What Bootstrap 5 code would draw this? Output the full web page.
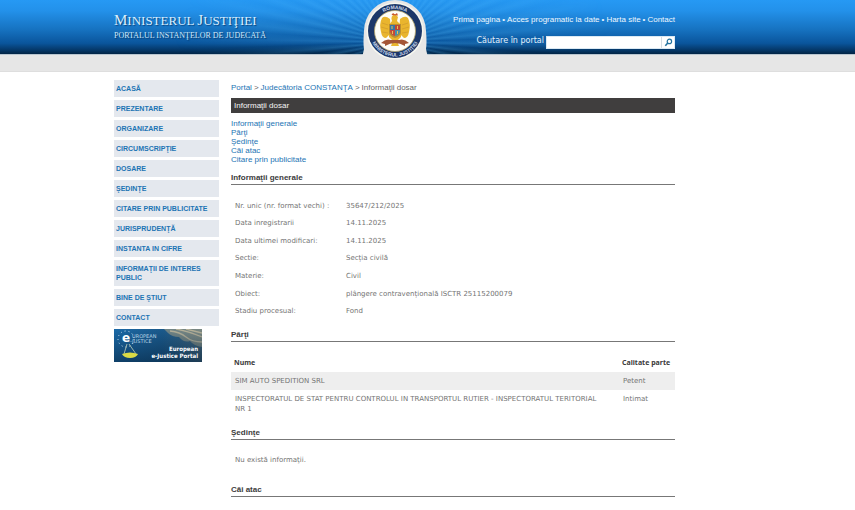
<!DOCTYPE html>
<html lang="ro">
<head>
<meta charset="utf-8">
<meta name="viewport" content="width=device-width, initial-scale=1">
<title>Informaţii dosar - Portalul instanţelor de judecată</title>
<link rel="stylesheet" href="https://cdn.jsdelivr.net/npm/bootstrap@5.3.0/dist/css/bootstrap.min.css">
<style>
  body { font: 8px/9px "Liberation Sans", Arial, sans-serif; color: #444; background: #fff; overflow-x: hidden; }
  a { color: #1c74b4; text-decoration: none; }
  a:hover { text-decoration: underline; }
  .page-shift { padding-right: 66px; }
  .page-wrap { max-width: 561px; }
  .site-top { background: linear-gradient(#2699f4 0, #2391ea 20%, #1672c0 55%, #0a559c 80%, #043462 94%, #022444 100%); height: 54px; position: relative; }
  .rays { position: absolute; inset: 0; right: 66px; overflow: hidden;
    background: repeating-conic-gradient(from 1deg at 50% 78%, rgba(90,190,250,.24) 0deg, rgba(0,60,120,.04) 3deg, rgba(90,190,250,.24) 6deg);
    -webkit-mask-image: radial-gradient(ellipse 220px 120px at 50% 78%, #000 15%, transparent 100%);
    mask-image: radial-gradient(ellipse 220px 120px at 50% 78%, #000 15%, transparent 100%); }
  .grey-band { height: 18px; background: #e6e6e6; border-top: 1px solid #b9c6d0; border-bottom: 1px solid #dedede; }
  .emblem { position: absolute; left: 50%; top: 0; margin-left: -33px; }
  .brand { padding-top: 13px; }
  .ministry { font: 13px/15px "Liberation Serif", "Times New Roman", serif; color: #d9efff; text-shadow: 1px 1px 1px #0a4580; margin-bottom: 3px; }
  .ministry .cap { font-size: 15px; }
  .portal-name { font: 8px/10px "Liberation Serif", "Times New Roman", serif; color: #d0e8fa; text-shadow: 1px 1px 1px #063a70; }
  .top-tools { padding-top: 15px; }
  .top-links { line-height: 10px; gap: 2px; color: #e8f5ff; margin-bottom: 11px; }
  .top-links a { color: #f0f8ff; }
  .search-label { font: 8px/10px "DejaVu Sans", Verdana, sans-serif; color: #e3f2fd; }
  .search-row { gap: 2px; }
  .search-box { width: 129px; height: 13px; background: #fff; border: 1px solid #dbe9f3; }
  .search-box input { min-width: 0; font-size: 8px; height: 11px; }
  .search-box button { width: 13px; height: 11px; border-left: 1px solid #d5dde3 !important; }
  .side { width: 105px; flex: none; }
  .side-nav { gap: 3px; }
  .side-item { background: #e4e8ee; font: bold 7px/9px "Liberation Sans", Arial, sans-serif; padding: 4px 2px; }
  .main-col { margin-left: 12px; min-width: 0; }
  .crumbs { line-height: 10px; gap: 2px; padding-top: 3px; color: #666; }
  .dark-title { background: #403e3e; color: #f4f4f4; font-size: 8px; line-height: 15px; font-weight: normal; padding-left: 3px; margin: 5px 0 6px; }
  .sec-title { font: bold 8px/10px "Liberation Sans", Arial, sans-serif; color: #3b3b3b; border-bottom: 1px solid #777; padding-bottom: 1px; margin: 0; }
  .toc { margin-bottom: 9px; }
  .data-text { font: 7px/10px "DejaVu Sans", Verdana, sans-serif; color: #747474; }
  .data-text th, .data-text td { padding: 0 4px; text-align: left; vertical-align: middle; font-weight: normal; }
  .info-table { height: 123px; margin: 12px 0 10px; }
  .info-table th { width: 111px; }
  .party-table { margin: 12px 0 10px; }
  .data-text .name-cell { padding-right: 12px; }
  .party-table th, .party-table td { padding: 4px; vertical-align: top; }
  .party-table thead th { font: bold 7px/10px "Noto Sans", Tahoma, sans-serif; color: #3b3b3b; padding: 4px 3px; }
  .party-table .role-col { width: 56px; white-space: nowrap; }
  .party-table .shade { background: #eee; }
  .empty-note { margin: 15px 4px 20px; }
</style>
<script src="https://cdn.jsdelivr.net/npm/bootstrap@5.3.0/dist/js/bootstrap.bundle.min.js"></script>
</head>
<body>
<header class="position-relative">
  <div class="site-top">
    <div class="rays"></div>
    <div class="page-shift position-relative">
      <div class="page-wrap mx-auto d-flex justify-content-between">
        <div class="brand">
          <div class="ministry"><span class="cap">M</span>INISTERUL <span class="cap">J</span>USTIŢIEI</div>
          <div class="portal-name">PORTALUL INSTANŢELOR DE JUDECATĂ</div>
        </div>
        <div class="top-tools d-flex flex-column align-items-end">
          <nav class="top-links d-flex" aria-label="Legături"><a href="#">Prima pagina</a><span>•</span><a href="#">Acces programatic la date</a><span>•</span><a href="#">Harta site</a><span>•</span><a href="#">Contact</a></nav>
          <form class="search-row d-flex">
            <label class="search-label" for="q">Căutare în portal</label>
            <div class="search-box d-flex">
              <input id="q" type="text" class="border-0 p-0 flex-grow-1">
              <button type="button" class="border-0 p-0 bg-white d-flex align-items-center justify-content-center" aria-label="Caută">
                <svg width="9" height="9" viewBox="0 0 9 9" fill="none" stroke="#23729f"><circle cx="5.4" cy="3.4" r="2.2" stroke-width="1.2"/><path d="M3.8 5 1.3 7.7" stroke-width="1.6"/></svg>
              </button>
            </div>
          </form>
        </div>
      </div>
    </div>
  </div>
  <div class="grey-band"></div>
  <div class="position-absolute top-0 start-0 w-100 page-shift pe-none">
    <div class="position-relative">
      <svg class="emblem" width="66" height="66" viewBox="0 0 66 66" role="img" aria-label="România, Ministerul Justiţiei">
        <path d="M0 66V57Q1 54 2 49Q1 43 2 31A31 31 0 0 1 64 31Q65 43 64 49Q65 54 66 57V66Z" fill="#e6e6e6"/>
        <circle cx="33" cy="31" r="28.500" fill="#f7f7ef"/>
        <circle cx="33" cy="31" r="27" fill="#1c3768"/>
        <circle cx="33" cy="31" r="20.500" fill="#fdfdf8" stroke="#b6a66a" stroke-width=".8"/>
        <path id="arcTop" d="M11 31A22 22 0 0 1 55 31" fill="none"/>
        <path id="arcLow" d="M7.500 31A25.500 25.500 0 0 0 58.500 31" fill="none"/>
        <g font-family="Liberation Sans" font-weight="bold" font-size="5" fill="#cfdced" text-anchor="middle">
          <text><textPath href="#arcTop" startOffset="50%">ROMANIA</textPath></text>
          <text><textPath href="#arcLow" startOffset="50%">MINISTERUL JUSTIŢIEI</textPath></text>
        </g>
        <g fill="#e9b52e">
          <path d="M28 19Q23 15 20 18Q17 24 19 32Q20 38 24 38L29 33ZM38 19Q43 15 46 18Q49 24 47 32Q46 38 42 38L37 33Z"/>
          <path d="M30 21Q28 16 33 14L36 17L35 21L39 25V37L35 41L37 46H29L31 41L27 37V25Z"/>
        </g>
        <path d="M20 23 26 25M19 27 26 29M20 32 26 33M46 23 40 25M47 27 40 29M46 32 40 33" stroke="#d09a2c" stroke-width=".7"/>
        <path d="M29.500 15 31 13 33 14.500 35 13 36 15.500Z" fill="#c8552d"/>
        <path d="M27 24H39V32Q39 36 33 38Q27 36 27 32Z" fill="#b98f32"/>
        <path d="M28 25H33V30H28Z" fill="#3974a5"/><path d="M33 25H38V30H33Z" fill="#bd4835"/>
        <path d="M28 30H33V36Q28 35 28 30Z" fill="#c44a3b"/><path d="M33 30H38Q38 35 33 36Z" fill="#478eaa"/>
        <path d="M30 26V29M35.500 26V29M30.500 31V34M35.500 31V34" stroke="#e7c353"/>
        <path d="M19 43Q24 38 29 40H37Q42 38 47 43L43 44V46Q38 43 33 43Q28 43 23 46V44Z" fill="#a45635"/>
      </svg>
    </div>
  </div>
</header>

<div class="page-shift">
  <div class="page-wrap mx-auto d-flex pt-2">
    <aside class="side">
      <nav class="side-nav d-flex flex-column" aria-label="Meniu">
        <a class="side-item" href="#">ACASĂ</a>
        <a class="side-item" href="#">PREZENTARE</a>
        <a class="side-item" href="#">ORGANIZARE</a>
        <a class="side-item" href="#">CIRCUMSCRIPŢIE</a>
        <a class="side-item" href="#">DOSARE</a>
        <a class="side-item" href="#">ŞEDINŢE</a>
        <a class="side-item" href="#">CITARE PRIN PUBLICITATE</a>
        <a class="side-item" href="#">JURISPRUDENŢĂ</a>
        <a class="side-item" href="#">INSTANTA IN CIFRE</a>
        <a class="side-item" href="#">INFORMAŢII DE INTERES PUBLIC</a>
        <a class="side-item" href="#">BINE DE ŞTIUT</a>
        <a class="side-item" href="#">CONTACT</a>
        <a href="#" aria-label="European e-Justice Portal">
          <svg class="d-block" width="88" height="33" viewBox="0 0 88 33">
            <defs>
              <linearGradient id="sea" x2="1" y2="0"><stop offset="0" stop-color="#1b6aa8"/><stop offset=".55" stop-color="#1b5a8c"/><stop offset="1" stop-color="#436478"/></linearGradient>
              <linearGradient id="deep" x2="0" y2="1"><stop offset="0" stop-color="#06233d" stop-opacity="0"/><stop offset="1" stop-color="#06233d" stop-opacity=".6"/></linearGradient>
            </defs>
            <path d="M0 0H88V33H0Z" fill="url(#sea)"/>
            <path d="M50 0H88V18Q80 17 76 12Q70 14 65 8Q58 8 54 4Z" fill="#8d9487" opacity=".75"/>
            <path d="M56 2Q66 3 72 8T88 13M62 0Q74 2 88 8M72 0 88 4" fill="none" stroke="#d3c4a2" stroke-width="1.300" opacity=".7"/>
            <path d="M0 0H88V33H0Z" fill="url(#deep)"/>
            <circle cx="12" cy="10" r="8" fill="none" stroke="#d8e8f3" stroke-width="1" stroke-dasharray="1 3"/>
            <g font-family="DejaVu Sans" font-weight="bold" fill="#fff">
              <text x="8" y="13" font-size="12">e</text>
              <g font-size="5" font-weight="normal" fill="#b9d4e6"><text x="18" y="9">UROPEAN</text><text x="16" y="14">-JUSTICE</text></g>
              <g font-family="DejaVu Sans Condensed" font-size="6" text-anchor="end"><text x="84" y="22">European</text><text x="84" y="29">e-Justice Portal</text></g>
            </g>
            <path d="M13 15 10 25M15 15 22 25" stroke="#d9e2c0" stroke-width=".7"/>
            <path d="M8 25Q16 22 24 25Q22 29 16 29Q10 29 8 25Z" fill="#d9da45"/>
          </svg>
        </a>
      </nav>
    </aside>
    <main class="main-col flex-grow-1">
      <nav class="crumbs d-flex" aria-label="Cale"><a href="#">Portal</a><span>&gt;</span><a href="#">Judecătoria CONSTANŢA</a><span>&gt;</span><span>Informaţii dosar</span></nav>
      <h1 class="dark-title">Informaţii dosar</h1>
      <nav class="toc d-flex flex-column align-items-start" aria-label="Cuprins">
        <a href="#generale">Informaţii generale</a>
        <a href="#parti">Părţi</a>
        <a href="#sedinte">Şedinţe</a>
        <a href="#atac">Căi atac</a>
        <a href="#citare">Citare prin publicitate</a>
      </nav>
      <h2 class="sec-title" id="generale">Informaţii generale</h2>
      <table class="info-table data-text w-100">
        <tbody>
          <tr><th scope="row">Nr. unic (nr. format vechi) :</th><td>35647/212/2025</td></tr>
          <tr><th scope="row">Data inregistrarii</th><td>14.11.2025</td></tr>
          <tr><th scope="row">Data ultimei modificari:</th><td>14.11.2025</td></tr>
          <tr><th scope="row">Sectie:</th><td>Secția civilă</td></tr>
          <tr><th scope="row">Materie:</th><td>Civil</td></tr>
          <tr><th scope="row">Obiect:</th><td>plângere contravențională ISCTR 25115200079</td></tr>
          <tr><th scope="row">Stadiu procesual:</th><td>Fond</td></tr>
        </tbody>
      </table>
      <h2 class="sec-title" id="parti">Părţi</h2>
      <table class="party-table data-text w-100">
        <thead><tr><th scope="col">Nume</th><th scope="col" class="role-col">Calitate parte</th></tr></thead>
        <tbody>
          <tr class="shade"><td class="name-cell">SIM AUTO SPEDITION SRL</td><td>Petent</td></tr>
          <tr><td class="name-cell">INSPECTORATUL DE STAT PENTRU CONTROLUL IN TRANSPORTUL RUTIER - INSPECTORATUL TERITORIAL NR 1</td><td>Intimat</td></tr>
        </tbody>
      </table>
      <h2 class="sec-title" id="sedinte">Şedinţe</h2>
      <p class="empty-note data-text">Nu există informaţii.</p>
      <h2 class="sec-title" id="atac">Căi atac</h2>
    </main>
  </div>
</div>
</body>
</html>
